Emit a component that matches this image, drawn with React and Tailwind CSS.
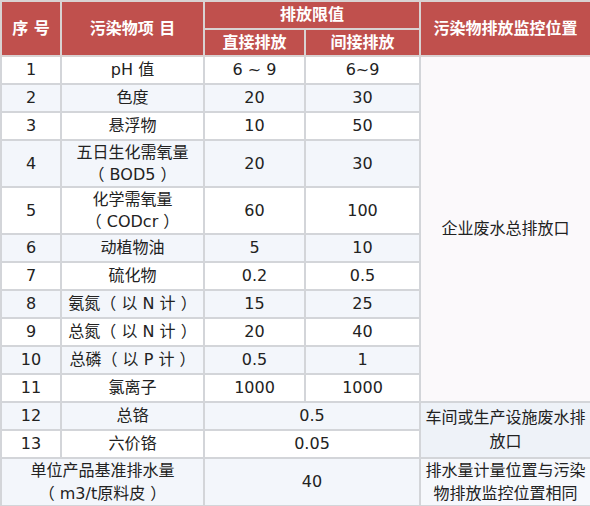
import React from 'react'

const font = { fontFamily: '"DejaVu Sans", "Noto Sans CJK SC", sans-serif' }

const rows = [
  { no: '1', name: 'pH 值', a: '6 ~ 9', b: '6~9' },
  { no: '2', name: '色度', a: '20', b: '30' },
  { no: '3', name: '悬浮物', a: '10', b: '50' },
  { no: '4', name: ['五日生化需氧量', '（ BOD5 ）'], a: '20', b: '30', tall: true },
  { no: '5', name: ['化学需氧量', '（ CODcr ）'], a: '60', b: '100', tall: true },
  { no: '6', name: '动植物油', a: '5', b: '10' },
  { no: '7', name: '硫化物', a: '0.2', b: '0.5' },
  { no: '8', name: '氨氮（ 以 N 计 ）', a: '15', b: '25' },
  { no: '9', name: '总氮（ 以 N 计 ）', a: '20', b: '40' },
  { no: '10', name: '总磷（ 以 P 计 ）', a: '0.5', b: '1' },
  { no: '11', name: '氯离子', a: '1000', b: '1000' },
]

const cell = 'border-2 border-[#d3d5d9] text-center align-middle p-0 text-[16px] leading-[22px] text-[#222]'
const head = 'border-2 border-[#d9d2d2] text-center align-middle p-0 text-[16px] leading-[22px] font-bold text-white bg-[#c0504d]'

export default function App() {
  return (
    <div className="w-[590px] h-[506px] bg-white overflow-hidden" style={font}>
      <table className="w-[590px] table-fixed border-collapse">
        <colgroup>
          <col className="w-[60px]" />
          <col className="w-[143px]" />
          <col className="w-[101px]" />
          <col className="w-[115px]" />
          <col className="w-[171px]" />
        </colgroup>
        <thead>
          <tr className="h-[28px]">
            <td rowSpan={2} className={head}>序 号</td>
            <td rowSpan={2} className={head}>污染物项 目</td>
            <td colSpan={2} className={head}>排放限值</td>
            <td rowSpan={2} className={head}>污染物排放监控位置</td>
          </tr>
          <tr className="h-[27px]">
            <td className={head}>直接排放</td>
            <td className={head}>间接排放</td>
          </tr>
        </thead>
        <tbody>
          {rows.map((r, i) => {
            const bg = i % 2 === 1 ? 'bg-[#f3f6fb]' : 'bg-white'
            return (
              <tr key={r.no} className={r.tall ? 'h-[47px]' : 'h-[28px]'}>
                <td className={`${cell} ${bg}`}>{r.no}</td>
                <td className={`${cell} ${bg}`}>
                  {Array.isArray(r.name) ? (
                    <>
                      <div>{r.name[0]}</div>
                      <div>{r.name[1]}</div>
                    </>
                  ) : (
                    r.name
                  )}
                </td>
                <td className={`${cell} ${bg}`}>{r.a}</td>
                <td className={`${cell} ${bg}`}>{r.b}</td>
                {i === 0 && (
                  <td rowSpan={11} className={`${cell} bg-[#fbf9fb]`}>企业废水总排放口</td>
                )}
              </tr>
            )
          })}
          <tr className="h-[28px]">
            <td className={`${cell} bg-[#f3f6fb]`}>12</td>
            <td className={`${cell} bg-[#f3f6fb]`}>总铬</td>
            <td colSpan={2} className={`${cell} bg-[#f3f6fb]`}>0.5</td>
            <td rowSpan={2} className={`${cell} bg-[#eef2f8] px-1 leading-[24px]`}>
              车间或生产设施废水排放口
            </td>
          </tr>
          <tr className="h-[28px]">
            <td className={`${cell} bg-white`}>13</td>
            <td className={`${cell} bg-white`}>六价铬</td>
            <td colSpan={2} className={`${cell} bg-white`}>0.05</td>
          </tr>
          <tr className="h-[47px]">
            <td colSpan={2} className={`${cell} bg-[#f3f6fb] leading-[23px]`}>
              <div>单位产品基准排水量</div>
              <div>（ m3/t原料皮 ）</div>
            </td>
            <td colSpan={2} className={`${cell} bg-[#f3f6fb]`}>40</td>
            <td className={`${cell} bg-[#f6f8fc] px-1 leading-[23px]`}>
              排水量计量位置与污染物排放监控位置相同
            </td>
          </tr>
        </tbody>
      </table>
    </div>
  )
}
